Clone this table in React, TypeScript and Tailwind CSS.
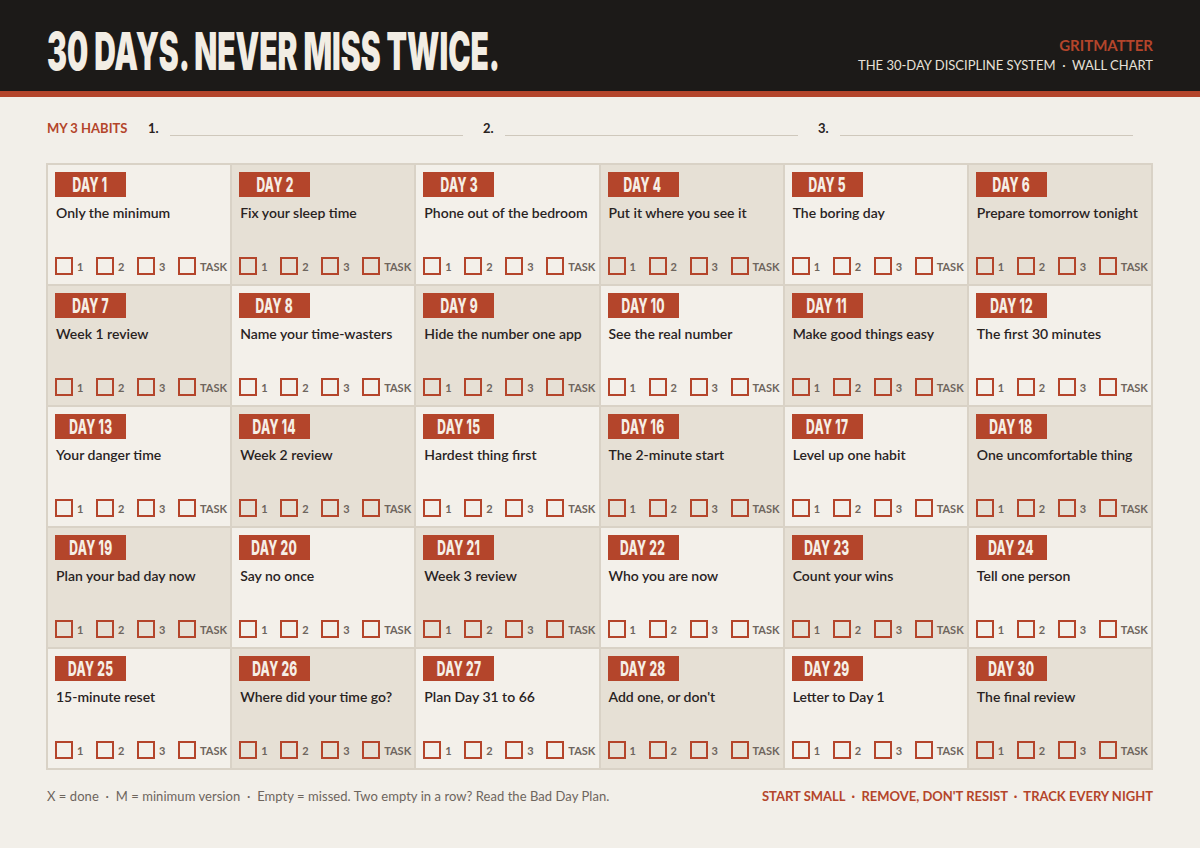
const DAYS = [
  "Only the minimum",
  "Fix your sleep time",
  "Phone out of the bedroom",
  "Put it where you see it",
  "The boring day",
  "Prepare tomorrow tonight",
  "Week 1 review",
  "Name your time-wasters",
  "Hide the number one app",
  "See the real number",
  "Make good things easy",
  "The first 30 minutes",
  "Your danger time",
  "Week 2 review",
  "Hardest thing first",
  "The 2-minute start",
  "Level up one habit",
  "One uncomfortable thing",
  "Plan your bad day now",
  "Say no once",
  "Week 3 review",
  "Who you are now",
  "Count your wins",
  "Tell one person",
  "15-minute reset",
  "Where did your time go?",
  "Plan Day 31 to 66",
  "Add one, or don't",
  "Letter to Day 1",
  "The final review",
];

const CHECKS = ["1", "2", "3", "TASK"];

function Check({ label }: { label: string }) {
  return (
    <div className="flex w-[41px] items-center gap-[4px]">
      <span className="block h-[18px] w-[18px] shrink-0 border-2 border-[#b4452b]" />
      <span className="text-[11px] font-bold leading-none text-[#6e655d]">{label}</span>
    </div>
  );
}

function DayCell({ n, title }: { n: number; title: string }) {
  const row = Math.floor((n - 1) / 6);
  const col = (n - 1) % 6;
  const dark = (row + col) % 2 === 1;
  return (
    <div
      className={`flex flex-col pl-[7px] pt-[7px] pb-[9px] ${
        dark ? "bg-[#e6e0d5]" : "bg-[#f3f0ea]"
      }`}
    >
      <div className="flex h-[25px] w-[71px] items-center justify-center overflow-hidden bg-[#b4452b]">
        <span className="inline-block scale-x-[0.6] whitespace-nowrap font-['Inter'] text-[20px] font-extrabold leading-none tracking-[0.5px] text-[#f6efe6]">
          DAY {n}
        </span>
      </div>
      <p className="mt-[7px] pl-px text-[14px] font-semibold leading-[18px] text-[#29231f]">{title}</p>
      <div className="mt-auto flex">
        {CHECKS.map((c) => (
          <Check key={c} label={c} />
        ))}
      </div>
    </div>
  );
}

export default function App() {
  return (
    <div className="h-[848px] w-[1200px] overflow-hidden bg-[#f2efe9] font-['Lato',sans-serif]">
      <header className="flex h-[91px] justify-between bg-[#1c1a18] px-[47px]">
        <div className="pt-[26px]">
          <h1 className="inline-block origin-left scale-x-[0.575] whitespace-nowrap font-['Inter'] text-[52px] font-black leading-none text-[#f2ede4]">
            30 DAYS. NEVER MISS TWICE.
          </h1>
        </div>
        <div className="pt-[36px] text-right">
          <p className="text-[15px] font-bold leading-[18px] text-[#b4452b]">GRITMATTER</p>
          <p className="mt-[3px] text-[13px] leading-[16px] text-[#e6e1d8]">
            THE 30-DAY DISCIPLINE SYSTEM &nbsp;·&nbsp; WALL CHART
          </p>
        </div>
      </header>
      <div className="h-[6px] bg-[#b4452b]" />

      <div className="flex items-end px-[47px] pt-[23px]">
        <span className="w-[101px] text-[13px] font-bold leading-4 text-[#b4452b]">MY 3 HABITS</span>
        {["1.", "2.", "3."].map((h) => (
          <div key={h} className="mr-[20px] flex items-end">
            <span className="w-[22px] text-[13px] font-bold leading-4 text-[#29231f]">{h}</span>
            <div className="h-px w-[293px] bg-[#cfc8bc]" />
          </div>
        ))}
      </div>

      <div className="ml-[46px] mt-[27px] grid h-[607px] w-[1107px] grid-cols-6 grid-rows-5 gap-[2px] bg-[#d9d2c6] p-[2px]">
        {DAYS.map((t, i) => (
          <DayCell key={i} n={i + 1} title={t} />
        ))}
      </div>

      <footer className="mt-[18px] flex justify-between px-[47px] text-[13px] leading-4">
        <p className="tracking-[0.05px] text-[#6e655d]">
          X = done &nbsp;·&nbsp; M = minimum version &nbsp;·&nbsp; Empty = missed. Two empty in a row? Read the Bad Day Plan.
        </p>
        <p className="font-bold text-[#b4452b]">
          START SMALL &nbsp;·&nbsp; REMOVE, DON'T RESIST &nbsp;·&nbsp; TRACK EVERY NIGHT
        </p>
      </footer>
    </div>
  );
}
